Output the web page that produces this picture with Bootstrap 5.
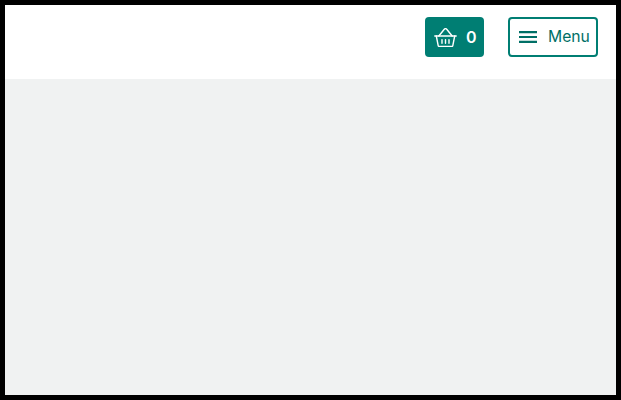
<!DOCTYPE html>
<html lang="en">
<head>
<meta charset="utf-8">
<title>Shop</title>
<link href="https://cdn.jsdelivr.net/npm/bootstrap@5.3.0/dist/css/bootstrap.min.css" rel="stylesheet">
<style>
html, body { height: 100%; }
body { background: #000; padding: 5px; font-family: "Inter", "Noto Sans", sans-serif; }
.shell { height: 100%; background: #f0f2f2; }
.topbar { height: 74px; background: #fff; padding: 12px 18px 0 0; gap: 24px; }
.basket-btn, .menu-btn { height: 40px; border-radius: 4px; font-size: 15.7px; line-height: 1; padding: 0; }
.basket-btn { width: 59px; background: #007e73; border: 0; color: #fff; padding-left: 9px; gap: 9px; }
.basket-btn:hover { background: #007e73; color: #fff; }
.menu-btn { width: 90px; background: #fff; border: 2px solid #007e73; color: #006f66; padding-left: 9px; gap: 11px; }
.menu-btn:hover { background: #fff; color: #006f66; }
.count { font-size: 16px; font-weight: 600; }
</style>
</head>
<body>
<div class="shell d-flex flex-column">
  <header class="topbar d-flex align-items-start justify-content-end flex-shrink-0">
    <button type="button" class="btn basket-btn d-flex align-items-center">
      <svg width="23" height="19" viewBox="0 0 23 19" fill="none" stroke="#fff" stroke-width="1.4" stroke-linecap="round" stroke-linejoin="round" aria-hidden="true">
        <path d="M.8 8h21.4"/>
        <path d="M2.3 8 4.2 17.6a.9.9 0 0 0 .9.8h12.8a.9.9 0 0 0 .9-.8L20.7 8"/>
        <path d="M4.8 8 10.3 1.2a1.6 1.6 0 0 1 2.4 0L18.2 8"/>
        <path d="M8 11.6v3.6M11.5 11.6v3.6M15 11.6v3.6"/>
      </svg>
      <span class="count">0</span>
    </button>
    <button type="button" class="btn menu-btn d-flex align-items-center">
      <svg width="18" height="12" viewBox="0 0 18 12" fill="none" stroke="#006f66" stroke-width="2.2" aria-hidden="true">
        <path d="M0 1.1h18M0 6h18M0 10.9h18"/>
      </svg>
      <span>Menu</span>
    </button>
  </header>
  <main class="flex-grow-1"></main>
</div>
<script src="https://cdn.jsdelivr.net/npm/bootstrap@5.3.0/dist/js/bootstrap.bundle.min.js"></script>
</body>
</html>
